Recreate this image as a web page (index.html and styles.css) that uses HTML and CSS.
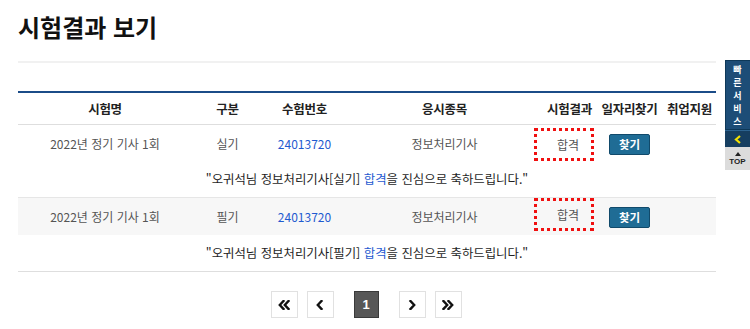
FILE: index.html
```html
<!DOCTYPE html>
<html lang="ko">
<head>
<meta charset="utf-8">
<title>시험결과 보기</title>
<link rel="stylesheet" href="styles.css">
</head>
<body>
<div class="page">
  <h1 class="title">시험결과 보기</h1>
  <div class="divider"></div>
  <table class="result">
    <thead>
      <tr>
        <th class="c1">시험명</th>
        <th class="c2">구분</th>
        <th class="c3">수험번호</th>
        <th class="c4">응시종목</th>
        <th class="c5">시험결과</th>
        <th class="c6">일자리찾기</th>
        <th class="c7">취업지원</th>
      </tr>
    </thead>
    <tbody>
      <tr class="row">
        <td>2022년 정기 기사 1회</td>
        <td>실기</td>
        <td><a class="num">24013720</a></td>
        <td>정보처리기사</td>
        <td class="left"><span class="mark mark1">합격</span></td>
        <td><button class="find">찾기</button></td>
        <td></td>
      </tr>
      <tr class="msg">
        <td colspan="7">"오귀석님 정보처리기사[실기] <span class="pass">합격</span>을 진심으로 축하드립니다."</td>
      </tr>
      <tr class="row alt">
        <td>2022년 정기 기사 1회</td>
        <td>필기</td>
        <td><a class="num">24013720</a></td>
        <td>정보처리기사</td>
        <td class="left"><span class="mark mark2">합격</span></td>
        <td><button class="find">찾기</button></td>
        <td></td>
      </tr>
      <tr class="msg">
        <td colspan="7">"오귀석님 정보처리기사[필기] <span class="pass">합격</span>을 진심으로 축하드립니다."</td>
      </tr>
    </tbody>
  </table>
  <nav class="pager">
    <a class="pbtn"><svg width="12" height="10" viewBox="0 0 12 10"><polyline points="5.5,1 1.8,5 5.5,9" /><polyline points="10.5,1 6.8,5 10.5,9" /></svg></a>
    <a class="pbtn"><svg width="8" height="10" viewBox="0 0 8 10"><polyline points="5.5,1 1.8,5 5.5,9" /></svg></a>
    <a class="pcur">1</a>
    <a class="pbtn"><svg width="8" height="10" viewBox="0 0 8 10"><polyline points="2.5,1 6.2,5 2.5,9" /></svg></a>
    <a class="pbtn"><svg width="12" height="10" viewBox="0 0 12 10"><polyline points="1.5,1 5.2,5 1.5,9" /><polyline points="6.5,1 10.2,5 6.5,9" /></svg></a>
  </nav>
</div>
<aside class="quick">
  <div class="quick-title"><span>빠</span><span>른</span><span>서</span><span>비</span><span>스</span></div>
  <div class="quick-toggle"><svg width="8" height="9" viewBox="0 0 8 9"><polyline points="6,1 2,4.5 6,8" /></svg></div>
  <div class="quick-top"><span class="tri"></span><span class="top-txt">TOP</span></div>
</aside>
</body>
</html>
```

FILE: styles.css
```css
html, body {
  margin: 0;
  padding: 0;
  background: #fff;
}
body {
  font-family: "Noto Sans CJK KR", "Noto Sans", sans-serif;
  color: #222;
  overflow: hidden;
}
.page {
  width: 698px;
  padding-left: 18px;
}
.title {
  margin: 0;
  padding-top: 12px;
  height: 30px;
  font-size: 24px;
  line-height: 30px;
  font-weight: 700;
  color: #111;
}
.divider {
  margin-top: 19px;
  height: 2px;
  background: #f1f1f1;
}
.result {
  margin-top: 28px;
  width: 698px;
  border-collapse: collapse;
  table-layout: fixed;
  border-top: 2px solid #1b4c88;
  border-bottom: 1px solid #dedede;
}
.result th {
  height: 31px;
  padding: 0;
  font-size: 12.5px;
  font-weight: 700;
  color: #222;
  text-align: center;
  white-space: nowrap;
  border-bottom: 1px solid #dedede;
  letter-spacing: -0.3px;
}
.c1 { width: 174px; }
.c2 { width: 71px; }
.c3 { width: 83px; }
.c4 { width: 197px; }
.c5 { width: 53px; }
.c6 { width: 67px; }
.c7 { width: 53px; }
.result td {
  padding: 0;
  text-align: center;
  font-size: 12px;
  white-space: nowrap;
}
.result td.left {
  text-align: left;
}
.row td {
  height: 36px;
  color: #555;
}
.row.alt td {
  height: 37px;
  background: #f7f7f7;
}
.msg td {
  height: 36px;
  color: #1e1e1e;
  font-size: 12.4px;
}
.msg + .row td {
  border-top: 1px solid #e6e6e6;
}
.num {
  color: #1f5ad0;
  text-decoration: none;
}
.pass {
  color: #1f5ad0;
}
.mark {
  display: inline-block;
  position: relative;
  margin-left: -9px;
  width: 46px;
  padding-left: 8px;
  height: 27px;
  line-height: 27px;
  border: 3px dotted #f01010;
  color: #555;
  text-align: center;
}
.mark1 { top: 1px; }
.mark2 { top: -2px; }
.find {
  width: 41px;
  height: 21px;
  padding: 0;
  border: 1px solid #114a6b;
  border-radius: 2px;
  background: #1f6c95;
  color: #fff;
  font-family: inherit;
  font-size: 11.5px;
  font-weight: 700;
  line-height: 19px;
  position: relative;
  top: 1px;
}
.pager {
  display: flex;
  justify-content: center;
  align-items: center;
  gap: 9px;
  margin-top: 19px;
  padding-right: 2px;
}
.pbtn, .pcur {
  box-sizing: border-box;
  width: 27px;
  height: 27px;
  display: flex;
  align-items: center;
  justify-content: center;
}
.pbtn {
  border: 1px solid #e1e1e1;
  background: #fff;
}
.pbtn svg polyline {
  fill: none;
  stroke: #111;
  stroke-width: 2.4;
  stroke-linecap: square;
}
.pcur {
  width: 25px;
  margin: 0 11px;
  background: #575757;
  border: 1px solid #3a3a3a;
  color: #fff;
  font-family: "Liberation Sans", sans-serif;
  font-weight: 700;
  font-size: 13px;
}
.quick {
  position: fixed;
  left: 725px;
  top: 60px;
  width: 27px;
  font-family: "Noto Sans CJK KR", sans-serif;
}
.quick-title {
  height: 70px;
  box-sizing: border-box;
  background: #1d4d77;
  border: 1px solid #0e3858;
  display: flex;
  flex-direction: column;
  align-items: center;
  justify-content: center;
  padding-right: 2px;
}
.quick-title span {
  display: block;
  color: #fff;
  font-size: 9px;
  font-weight: 700;
  line-height: 13px;
  height: 13px;
}
.quick-toggle {
  height: 17px;
  background: #163e60;
  border-top: 1px solid #2c6390;
  box-sizing: border-box;
  display: flex;
  align-items: center;
  justify-content: center;
  padding-right: 2px;
}
.quick-toggle polyline {
  fill: none;
  stroke: #f3e100;
  stroke-width: 2.2;
}
.quick-top {
  height: 23px;
  background: #dcdcdc;
  display: flex;
  flex-direction: column;
  align-items: center;
  justify-content: center;
  padding-right: 2px;
}
.tri {
  width: 0;
  height: 0;
  border-left: 3px solid transparent;
  border-right: 3px solid transparent;
  border-bottom: 4px solid #222;
  margin-bottom: 1px;
}
.top-txt {
  font-family: "Liberation Sans", sans-serif;
  font-size: 8px;
  font-weight: 700;
  line-height: 9px;
  color: #222;
}
```
